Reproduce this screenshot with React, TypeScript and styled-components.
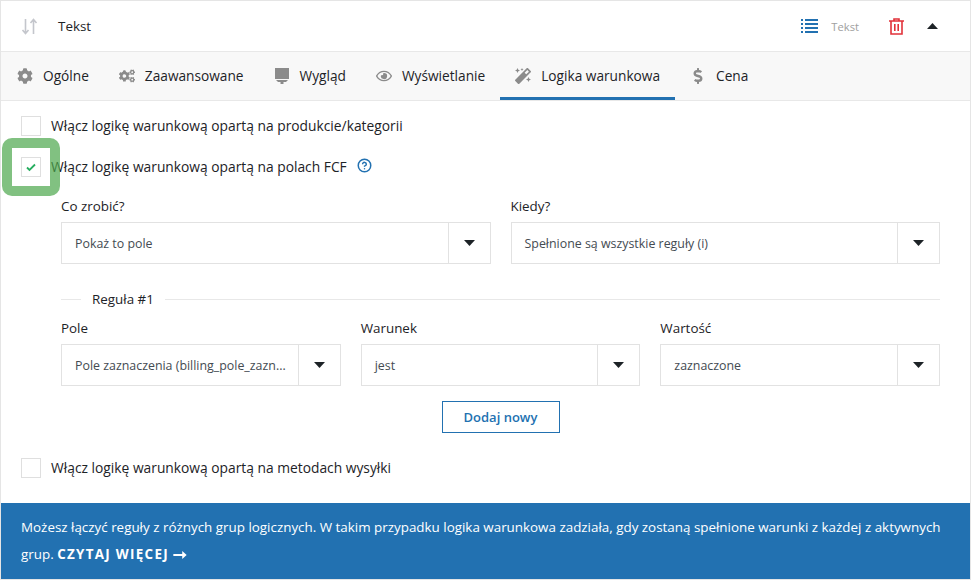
import React from "react";
import styled, { createGlobalStyle } from "styled-components";
import { FaCog, FaCogs, FaRegEye, FaMagic, FaDollarSign } from "react-icons/fa";
import { LuCircleHelp } from "react-icons/lu";

const GlobalStyle = createGlobalStyle`
  html, body { margin: 0; padding: 0; background: #fff; }
  body { font-family: "Open Sans", "Liberation Sans", sans-serif; font-size: 13.4px; color: #1d2327; }
`;

const Panel = styled.div`
  position: relative;
  width: 971px;
  height: 580px;
  box-sizing: border-box;
  border: 1px solid #e5e5e5;
  display: flex;
  flex-direction: column;
  overflow: hidden;
`;

const Header = styled.div`
  height: 50px;
  flex: none;
  display: flex;
  align-items: center;
  padding: 0 32px 0 20px;
  border-bottom: 1px solid #e8e8e8;
`;

const SortIcon = styled.svg`
  width: 17px;
  height: 17px;
  color: #c4c6cc;
  margin-right: 20px;
`;

const Title = styled.div`
  font-weight: 500;
  flex: 1;
`;

const ListIcon = styled.svg`
  width: 17px;
  height: 16px;
  color: #2271b1;
`;

const TypeLabel = styled.span`
  font-size: 11.2px;
  color: #a0a0a0;
  margin: 0 30px 0 13px;
`;

const TrashIcon = styled.svg`
  width: 15px;
  height: 17px;
  color: #e2323a;
  margin-right: 23px;
`;

const Triangle = styled.svg`
  width: 11px;
  height: 6px;
  color: #1d2327;
`;

const Tabs = styled.div`
  height: 48px;
  flex: none;
  display: flex;
  padding-left: 1px;
  background: #f8f8f8;
  border-bottom: 1px solid #e8e8e8;
`;

const Tab = styled.div<{ $active?: boolean }>`
  display: flex;
  align-items: center;
  gap: 10px;
  padding: 2px 15px 0;
  font-weight: 500;
  font-size: 13.7px;
  box-sizing: border-box;
  border-bottom: 3px solid ${(p) => (p.$active ? "#2271b1" : "transparent")};
  svg { width: 16px; height: 16px; color: #8b8b8b; flex: none; }
`;

const Content = styled.div`
  flex: 1;
  padding: 15px 30px 0 20px;
  display: flex;
  flex-direction: column;
`;

const CheckRow = styled.label<{ $mb?: number; $mt?: number }>`
  display: flex;
  align-items: flex-start;
  gap: 10px;
  height: 20px;
  line-height: 19px;
  font-weight: 500;
  font-size: 13.8px;
  margin-top: ${(p) => p.$mt ?? 0}px;
  margin-bottom: ${(p) => p.$mb ?? 0}px;
`;

const Box = styled.span`
  width: 20px;
  height: 20px;
  box-sizing: border-box;
  border: 1px solid #dfdfdf;
  background: #fff;
  display: flex;
  align-items: center;
  justify-content: center;
  svg { width: 12px; height: 12px; color: #27ae60; }
`;

const Highlight = styled.div`
  position: absolute;
  left: 1px;
  top: 137px;
  width: 58px;
  height: 58px;
  box-sizing: border-box;
  border: 10px solid rgba(76, 167, 76, 0.7);
  border-radius: 10px;
  pointer-events: none;
`;

const Help = styled(LuCircleHelp)`
  width: 15px;
  height: 15px;
  color: #2271b1;
  stroke-width: 2.4;
  margin-top: 1px;
`;

const Nested = styled.div`
  padding-left: 40px;
  display: flex;
  flex-direction: column;
`;

const Grid = styled.div<{ $cols: number }>`
  display: grid;
  grid-template-columns: repeat(${(p) => p.$cols}, minmax(0, 1fr));
  gap: 20px;
`;

const Field = styled.div`
  display: flex;
  flex-direction: column;
  min-width: 0;
`;

const FieldLabel = styled.div`
  font-weight: 500;
  line-height: 17px;
  margin-bottom: 7px;
`;

const Select = styled.div`
  height: 42px;
  box-sizing: border-box;
  border: 1px solid #e2e2e2;
  display: flex;
  align-items: stretch;
`;

const SelectValue = styled.div`
  flex: 1;
  min-width: 0;
  display: flex;
  align-items: center;
  padding: 0 13px;
  font-size: 12.4px;
  color: #444b52;
  white-space: nowrap;
`;

const Caret = styled.div`
  width: 41px;
  flex: none;
  border-left: 1px solid #e2e2e2;
  display: flex;
  align-items: center;
  justify-content: center;
`;

const Legend = styled.div`
  display: flex;
  align-items: center;
  gap: 11px;
  margin: 26px 0 12px;
  font-weight: 500;
  line-height: 18px;
  &::before { content: ""; width: 20px; height: 1px; background: #e8e8e8; }
  &::after { content: ""; flex: 1; height: 1px; background: #e8e8e8; }
`;

const Actions = styled.div`
  display: flex;
  justify-content: center;
  margin-top: 15px;
`;

const AddButton = styled.button`
  width: 118px;
  height: 32px;
  box-sizing: border-box;
  background: #fff;
  border: 1px solid #2271b1;
  color: #2271b1;
  font: 600 13px "Open Sans", sans-serif;
`;

const Notice = styled.div`
  flex: none;
  height: 76px;
  box-sizing: border-box;
  background: #2271b1;
  color: #fff;
  padding: 11px 20px;
  line-height: 27px;
  font-weight: 500;
`;

const More = styled.a`
  font-weight: 700;
  font-size: 13.4px;
  letter-spacing: 1.3px;
`;

const ArrowIcon = styled.svg`
  width: 14px;
  height: 8px;
  margin-left: -1px;
`;

function CaretDown() {
  return (
    <Triangle viewBox="0 0 11 6" fill="currentColor">
      <path d="M0 0h11L5.500 6z" />
    </Triangle>
  );
}

function SelectBox({ value }: { value: string }) {
  return (
    <Select>
      <SelectValue>{value}</SelectValue>
      <Caret><CaretDown /></Caret>
    </Select>
  );
}

function Roller() {
  return (
    <svg viewBox="0 0 16 16" fill="currentColor">
      <path d="M1 0h14v11H1zM2 12h12l-2 2H4zM6.500 14h3v2h-3z" />
    </svg>
  );
}

export default function App() {
  return (
    <>
      <GlobalStyle />
      <Panel>
        <Header>
          <SortIcon viewBox="0 0 17 17" fill="none" stroke="currentColor" strokeWidth="1.6">
            <path d="M4.500 1v14M1.500 12l3 3.500 3-3.500M12.500 16V2M9.500 5l3-3.500 3 3.500" />
          </SortIcon>
          <Title>Tekst</Title>
          <ListIcon viewBox="0 0 17 16" fill="currentColor">
            <path d="M0 1h2v2H0zM4 1h13v2H4zM0 5h2v2H0zM4 5h13v2H4zM0 9h2v2H0zM4 9h13v2H4zM0 13h2v2H0zM4 13h13v2H4z" />
          </ListIcon>
          <TypeLabel>Tekst</TypeLabel>
          <TrashIcon viewBox="0 0 15 17" fill="none" stroke="currentColor" strokeWidth="1.600">
            <path d="M0 3h15M5 3V1h5v2M2 3v13h11V3M5.800 6v7M9.200 6v7" />
          </TrashIcon>
          <Triangle viewBox="0 0 11 6" fill="currentColor">
            <path d="M0 6h11L5.500 0z" />
          </Triangle>
        </Header>
        <Tabs>
          <Tab><FaCog />Ogólne</Tab>
          <Tab><FaCogs />Zaawansowane</Tab>
          <Tab><Roller />Wygląd</Tab>
          <Tab><FaRegEye />Wyświetlanie</Tab>
          <Tab $active><FaMagic />Logika warunkowa</Tab>
          <Tab><FaDollarSign />Cena</Tab>
        </Tabs>
        <Content>
          <CheckRow $mb={21}><Box />Włącz logikę warunkową opartą na produkcie/kategorii</CheckRow>
          <CheckRow $mb={21}>
            <Box><svg viewBox="0 0 12 12" fill="none" stroke="currentColor" strokeWidth="1.800"><path d="M2 6.500l2.500 2.500L10 3.500" /></svg></Box>
            Włącz logikę warunkową opartą na polach FCF
            <Help />
          </CheckRow>
          <Nested>
            <Grid $cols={2}>
              <Field>
                <FieldLabel>Co zrobić?</FieldLabel>
                <SelectBox value="Pokaż to pole" />
              </Field>
              <Field>
                <FieldLabel>Kiedy?</FieldLabel>
                <SelectBox value="Spełnione są wszystkie reguły (i)" />
              </Field>
            </Grid>
            <Legend>Reguła #1</Legend>
            <Grid $cols={3}>
              <Field>
                <FieldLabel>Pole</FieldLabel>
                <SelectBox value="Pole zaznaczenia (billing_pole_zazn..." />
              </Field>
              <Field>
                <FieldLabel>Warunek</FieldLabel>
                <SelectBox value="jest" />
              </Field>
              <Field>
                <FieldLabel>Wartość</FieldLabel>
                <SelectBox value="zaznaczone" />
              </Field>
            </Grid>
            <Actions><AddButton>Dodaj nowy</AddButton></Actions>
          </Nested>
          <CheckRow $mt={25}><Box />Włącz logikę warunkową opartą na metodach wysyłki</CheckRow>
        </Content>
        <Notice>
          Możesz łączyć reguły z różnych grup logicznych. W takim przypadku logika warunkowa zadziała, gdy zostaną spełnione warunki z każdej z aktywnych
          <br />
          grup. <More>CZYTAJ WIĘCEJ <ArrowIcon viewBox="0 0 15 9" fill="currentColor"><path d="M0 3.500h10V0l5 4.500-5 4.500V5.500H0z" /></ArrowIcon></More>
        </Notice>
        <Highlight />
      </Panel>
    </>
  );
}
